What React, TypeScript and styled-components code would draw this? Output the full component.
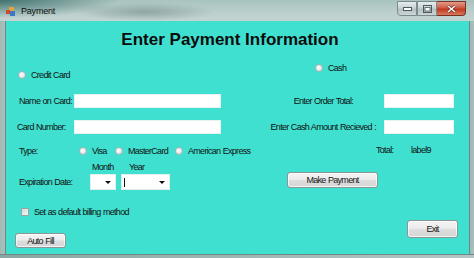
import React from 'react';
import styled, { createGlobalStyle } from 'styled-components';

const GlobalStyle = createGlobalStyle`
  html, body {
    margin: 0;
    padding: 0;
    width: 474px;
    height: 258px;
    overflow: hidden;
    background: #6d8f8c;
  }
  * {
    box-sizing: border-box;
  }
`;

const Window = styled.div`
  width: 474px;
  height: 258px;
  display: flex;
  flex-direction: column;
  background: linear-gradient(90deg, #8fb2ad 0%, #b9ccca 40%, #c3cdd0 100%);
  font-family: 'Liberation Sans', Arial, sans-serif;
  color: #111;
`;

const TitleBar = styled.div`
  height: 21px;
  display: flex;
  align-items: center;
  padding-left: 6px;
  background:
    radial-gradient(ellipse 70px 9px at 145px 12px, rgba(40, 70, 68, 0.3), transparent),
    radial-gradient(ellipse 120px 18px at 0px 0px, rgba(20, 80, 75, 0.7), transparent),
    linear-gradient(180deg, #a9c3bf 0%, #bcd0cd 60%, #c4d3d1 100%);
`;

const AppIcon = styled.svg`
  width: 9px;
  height: 9px;
  margin-right: 6px;
  margin-top: 1px;
`;

const WindowTitle = styled.span`
  font-size: 9px;
  letter-spacing: -0.2px;
  color: #101010;
  flex: 1;
`;

const CaptionButtons = styled.div`
  display: flex;
  align-self: flex-start;
  margin-right: 8px;
  margin-top: 1px;
`;

const CaptionButton = styled.div<{ close?: boolean }>`
  width: ${p => (p.close ? '29px' : '20px')};
  height: 15px;
  display: flex;
  align-items: center;
  justify-content: center;
  border: 1px solid ${p => (p.close ? '#7a3124' : '#7b8a8c')};
  border-left-width: ${p => (p.close ? '0' : '1px')};
  border-radius: ${p => (p.close ? '0 0 4px 0' : '0')};
  background: ${p =>
    p.close
      ? 'linear-gradient(180deg, #e39c8c 0%, #cf5a42 45%, #c0391f 55%, #d8785c 100%)'
      : 'linear-gradient(180deg, #e6ecee 0%, #c9d3d6 45%, #b3c0c4 55%, #cdd6d8 100%)'};
  &:first-child {
    border-radius: 0 0 0 4px;
  }
`;

const Middle = styled.div`
  flex: 1;
  display: flex;
`;

const SideFrame = styled.div<{ w: number }>`
  width: ${p => p.w}px;
  background: linear-gradient(90deg, #9ebab5, #a9c0bd);
  border-right: ${p => (p.w === 6 ? '1px solid #6f8785' : 'none')};
  border-left: ${p => (p.w === 5 ? '1px solid #6f8785' : 'none')};
`;

const BottomFrame = styled.div`
  height: 4px;
  background: linear-gradient(90deg, #8aa7a3, #b6c4c6);
  border-top: 1px solid #6f8785;
`;

const Client = styled.div`
  width: 463px;
  height: 233px;
  background: #40e0d0;
  display: flex;
  flex-direction: column;
  font-size: 9px;
  letter-spacing: -0.7px;
  word-spacing: 0.5px;
`;

const Heading = styled.h1`
  margin: 9px 0 0 0;
  padding-right: 15px;
  height: 20px;
  line-height: 20px;
  text-align: center;
  font-size: 17px;
  font-weight: bold;
  letter-spacing: 0;
  word-spacing: 0;
  color: #0c0c0c;
`;

const Columns = styled.div`
  display: flex;
  flex: 1;
`;

const Column = styled.div<{ w?: number }>`
  display: flex;
  flex-direction: column;
  width: ${p => (p.w ? `${p.w}px` : 'auto')};
  flex: ${p => (p.w ? 'none' : '1')};
`;

const Row = styled.div<{ top: number; h: number; left?: number }>`
  display: flex;
  align-items: center;
  margin-top: ${p => p.top}px;
  height: ${p => p.h}px;
  padding-left: ${p => p.left ?? 0}px;
`;

const Label = styled.span<{ w?: number; right?: number }>`
  width: ${p => (p.w ? `${p.w}px` : 'auto')};
  flex: none;
  white-space: nowrap;
  text-align: ${p => (p.right !== undefined ? 'right' : 'left')};
  padding-right: ${p => p.right ?? 0}px;
`;

const TextBox = styled.div<{ w: number }>`
  width: ${p => p.w}px;
  height: 14px;
  background: #fff;
  border: 1px solid #e6f3f1;
`;

const RadioDot = styled.span`
  width: 8px;
  height: 8px;
  border-radius: 50%;
  border: 1px solid #a9b4b6;
  background: radial-gradient(circle at 40% 40%, #ffffff 0%, #eceeee 45%, #c9cfd0 100%);
  margin-right: 5px;
  flex: none;
`;

const RadioOption = styled.span<{ at: number }>`
  position: absolute;
  left: ${p => p.at}px;
  display: flex;
  align-items: center;
`;

const OptionGroup = styled.div`
  position: relative;
  flex: 1;
  height: 100%;
  display: flex;
  align-items: center;
`;

const CheckBoxSquare = styled.span`
  width: 8px;
  height: 8px;
  border: 1px solid #9aa5a7;
  background: linear-gradient(135deg, #d8dcdd, #f4f5f5);
  margin-right: 5px;
  flex: none;
`;

const Combo = styled.div<{ w: number; gap: number }>`
  width: ${p => p.w}px;
  height: 16px;
  margin-left: ${p => p.gap}px;
  background: #fff;
  border: 1px solid #e2efed;
  display: flex;
  align-items: center;
  justify-content: flex-end;
  padding-right: 4px;
  position: relative;
`;

const Caret = styled.span`
  position: absolute;
  left: 2px;
  top: 3px;
  width: 1px;
  height: 9px;
  background: #111;
`;

const Arrow = styled.span`
  width: 0;
  height: 0;
  border-left: 3px solid transparent;
  border-right: 3px solid transparent;
  border-top: 3px solid #111;
  margin-top: 1px;
`;

const Button = styled.div<{ w: number; h: number; top: number; left: number }>`
  width: ${p => p.w}px;
  height: ${p => p.h}px;
  margin-top: ${p => p.top}px;
  margin-left: ${p => p.left}px;
  border: 1px solid #8c9596;
  border-radius: 3px;
  background: linear-gradient(180deg, #f4f4f4 0%, #ececec 45%, #dcdcdc 55%, #d6d6d6 100%);
  box-shadow: inset 0 0 0 1px rgba(255, 255, 255, 0.7);
  display: flex;
  align-items: center;
  justify-content: center;
  color: #151515;
`;

export default function App() {
  return (
    <>
      <GlobalStyle />
      <Window>
        <TitleBar>
          <AppIcon viewBox="0 0 9 9">
            <rect x="3" y="0" width="5" height="4" fill="#e8a23a" />
            <rect x="0" y="3" width="4" height="4" fill="#d04a2a" />
            <rect x="4" y="4" width="5" height="5" fill="#3b78c8" />
          </AppIcon>
          <WindowTitle>Payment</WindowTitle>
          <CaptionButtons>
            <CaptionButton>
              <svg width="9" height="4" viewBox="0 0 9 4">
                <rect x="0.5" y="0.5" width="8" height="3" fill="#fff" stroke="#4c5a5e" />
              </svg>
            </CaptionButton>
            <CaptionButton>
              <svg width="9" height="8" viewBox="0 0 9 8">
                <rect x="0.5" y="0.5" width="8" height="7" fill="none" stroke="#4c5a5e" />
                <rect x="2" y="2.5" width="5" height="3.5" fill="#fff" stroke="#4c5a5e" strokeWidth="0.8" />
              </svg>
            </CaptionButton>
            <CaptionButton close>
              <svg width="9" height="8" viewBox="0 0 9 8">
                <path d="M1 1 L8 7 M8 1 L1 7" stroke="#5a2016" strokeWidth="2.6" />
                <path d="M1 1 L8 7 M8 1 L1 7" stroke="#fff" strokeWidth="1.6" />
              </svg>
            </CaptionButton>
          </CaptionButtons>
        </TitleBar>
        <Middle>
          <SideFrame w={6} />
          <Client>
            <Heading>Enter Payment Information</Heading>
            <Columns>
              <Column w={255}>
                <Row top={19} h={12} left={12}>
                  <RadioDot />
                  <Label>Credit Card</Label>
                </Row>
                <Row top={13} h={14} left={13}>
                  <Label w={55}>Name on Card:</Label>
                  <TextBox w={147} />
                </Row>
                <Row top={12} h={14} left={11}>
                  <Label w={57}>Card Number:</Label>
                  <TextBox w={147} />
                </Row>
                <Row top={11} h={12} left={13}>
                  <Label w={60}>Type:</Label>
                  <OptionGroup>
                    <RadioOption at={0}>
                      <RadioDot />
                      Visa
                    </RadioOption>
                    <RadioOption at={36}>
                      <RadioDot />
                      MasterCard
                    </RadioOption>
                    <RadioOption at={96}>
                      <RadioDot />
                      American Express
                    </RadioOption>
                  </OptionGroup>
                </Row>
                <Row top={5} h={10} left={86}>
                  <Label w={37}>Month</Label>
                  <Label>Year</Label>
                </Row>
                <Row top={2} h={16} left={13}>
                  <Label w={71}>Expiration Date:</Label>
                  <Combo w={26} gap={0}>
                    <Arrow />
                  </Combo>
                  <Combo w={49} gap={5}>
                    <Caret />
                    <Arrow />
                  </Combo>
                </Row>
                <Row top={17} h={10} left={15}>
                  <CheckBoxSquare />
                  <Label>Set as default billing method</Label>
                </Row>
                <Button w={51} h={15} top={16} left={9}>
                  Auto Fill
                </Button>
              </Column>
              <Column>
                <Row top={12} h={12} left={54}>
                  <RadioDot />
                  <Label>Cash</Label>
                </Row>
                <Row top={20} h={14}>
                  <Label w={123} right={31}>Enter Order Total:</Label>
                  <TextBox w={70} />
                </Row>
                <Row top={12} h={14}>
                  <Label w={123} right={8}>Enter Cash Amount Recieved :</Label>
                  <TextBox w={70} />
                </Row>
                <Row top={10} h={12} left={115}>
                  <Label w={35}>Total:</Label>
                  <Label>label9</Label>
                </Row>
                <Button w={91} h={16} top={16} left={26}>
                  Make Payment
                </Button>
                <Button w={51} h={18} top={32} left={146}>
                  Exit
                </Button>
              </Column>
            </Columns>
          </Client>
          <SideFrame w={5} />
        </Middle>
        <BottomFrame />
      </Window>
    </>
  );
}
